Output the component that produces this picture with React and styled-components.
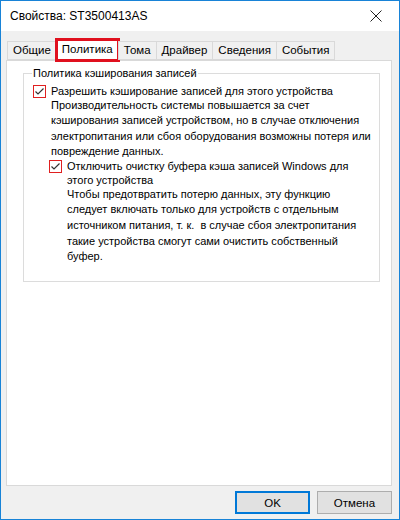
import React from "react";
import styled, { createGlobalStyle } from "styled-components";

const GlobalStyle = createGlobalStyle`
  html, body {
    margin: 0;
    padding: 0;
    background: #ffffff;
  }
  * {
    box-sizing: border-box;
  }
`;

const tabs = ["Общие", "Политика", "Тома", "Драйвер", "Сведения", "События"];

const CheckMark = () => (
  <svg width="11" height="11" viewBox="0 0 11 11">
    <path d="M1.5 5.5 L4 8 L9.5 2.5" stroke="#333" strokeWidth="1.2" fill="none" />
  </svg>
);

const App = () => {
  return (
    <>
      <GlobalStyle />
      <Window>
        <TitleBar>
          <Title>Свойства: ST3500413AS</Title>
          <CloseButton>
            <svg width="12" height="12" viewBox="0 0 12 12">
              <path d="M0.5 0.5 L11.5 11.5 M11.5 0.5 L0.5 11.5" stroke="#222" strokeWidth="1" />
            </svg>
          </CloseButton>
        </TitleBar>
        <Body>
          <TabStrip>
            {tabs.map((t) => (
              <Tab key={t} active={t === "Политика"}>
                {t}
              </Tab>
            ))}
          </TabStrip>
          <Panel>
            <Group>
              <Legend>Политика кэширования записей</Legend>
              <Option>
                <Check>
                  <CheckMark />
                </Check>
                <OptionBody>
                  <Label>Разрешить кэширование записей для этого устройства</Label>
                  <Hint>
                    Производительность системы повышается за счет
                    <br />
                    кэширования записей устройством, но в случае отключения
                    <br />
                    электропитания или сбоя оборудования возможны потеря или
                    <br />
                    повреждение данных.
                  </Hint>
                  <Option nested>
                    <Check>
                      <CheckMark />
                    </Check>
                    <OptionBody>
                      <Label>
                        Отключить очистку буфера кэша записей Windows для
                        <br />
                        этого устройства
                      </Label>
                      <Hint>
                        Чтобы предотвратить потерю данных, эту функцию
                        <br />
                        следует включать только для устройств с отдельным
                        <br />
                        источником питания, т. к.&nbsp; в случае сбоя электропитания
                        <br />
                        такие устройства смогут сами очистить собственный
                        <br />
                        буфер.
                      </Hint>
                    </OptionBody>
                  </Option>
                </OptionBody>
              </Option>
            </Group>
          </Panel>
          <ButtonRow>
            <Button primary>OK</Button>
            <Button>Отмена</Button>
          </ButtonRow>
        </Body>
      </Window>
    </>
  );
};

const Window = styled.div`
  width: 400px;
  height: 520px;
  border: 1px solid #1883d7;
  background: #f0f0f0;
  display: flex;
  flex-direction: column;
  font-family: "Liberation Sans", Arial, sans-serif;
  font-size: 11px;
  color: #000;
`;

const TitleBar = styled.div`
  height: 30px;
  background: #ffffff;
  display: flex;
  align-items: center;
  justify-content: space-between;
  padding-left: 9px;
`;

const Title = styled.div`
  font-size: 12px;
`;

const CloseButton = styled.div`
  width: 46px;
  height: 30px;
  display: flex;
  align-items: center;
  justify-content: center;
`;

const Body = styled.div`
  flex: 1;
  display: flex;
  flex-direction: column;
  padding: 7px 7px 0 5px;
`;

const TabStrip = styled.div`
  display: flex;
  align-items: flex-end;
  height: 22px;
  padding-left: 2px;
  position: relative;
  z-index: 1;
`;

const Tab = styled.div`
  height: ${(p) => (p.active ? "24px" : "19px")};
  margin: ${(p) => (p.active ? "0 -1px -2px -2px" : "0 0 0 -1px")};
  padding: 0 ${(p) => (p.active ? "4px" : "5px")};
  display: flex;
  align-items: center;
  justify-content: center;
  background: ${(p) => (p.active ? "#ffffff" : "#f0f0f0")};
  border: ${(p) => (p.active ? "3px solid #e0101e" : "1px solid #d9d9d9")};
  line-height: 1;
  font-size: 11.5px;
`;

const Panel = styled.div`
  height: 426px;
  background: #ffffff;
  border: 1px solid #d9d9d9;
  padding: 5px 13px 0 16px;
`;

const Group = styled.fieldset`
  margin: 0;
  height: 216px;
  border: 1px solid #dcdcdc;
  padding: 0 8px 0 9px;
`;

const Legend = styled.legend`
  padding: 0 1px;
  margin-left: -1px;
  line-height: 14px;
`;

const Option = styled.div`
  display: flex;
  align-items: flex-start;
  gap: 5px;
  margin-top: ${(p) => (p.nested ? "-1px" : "4px")};
  margin-left: ${(p) => (p.nested ? "-2px" : "0")};
`;

const Check = styled.div`
  width: 13px;
  height: 13px;
  flex: none;
  border: 1px solid #e02020;
  background: #ffffff;
  display: flex;
  align-items: center;
  justify-content: center;
  margin-top: 1px;
`;

const OptionBody = styled.div`
  flex: 1;
  white-space: nowrap;
`;

const Label = styled.div`
  line-height: 14.5px;
`;

const Hint = styled.div`
  line-height: 15.6px;
  margin-top: -1px;
`;

const ButtonRow = styled.div`
  display: flex;
  justify-content: flex-end;
  gap: 7px;
  padding-top: 5px;
`;

const Button = styled.button`
  width: 75px;
  height: 23px;
  font: inherit;
  font-size: 11.5px;
  color: #000;
  background: #e1e1e1;
  border: ${(p) => (p.primary ? "2px solid #0078d7" : "1px solid #adadad")};
  padding: 0;
`;

export default App;
